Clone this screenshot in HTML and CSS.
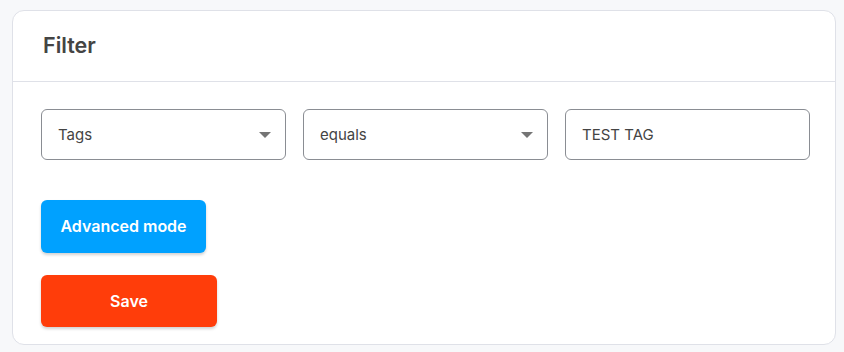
FILE: index.html
```html
<!DOCTYPE html>
<html lang="en">
<head>
    <meta charset="UTF-8">
    <meta name="viewport" content="width=device-width, initial-scale=1.0">
    <title>Filter</title>
    <link rel="stylesheet" href="styles.css">
</head>
<body>
    <div class="card">
        <div class="card-header">
            <h2>Filter</h2>
        </div>
        <div class="card-body">
            <div class="filter-row">
                <div class="field select">
                    <span>Tags</span>
                    <span class="arrow"></span>
                </div>
                <div class="field select">
                    <span>equals</span>
                    <span class="arrow"></span>
                </div>
                <div class="field">
                    <span>TEST TAG</span>
                </div>
            </div>
            <button class="btn btn-advanced">Advanced mode</button>
            <button class="btn btn-save">Save</button>
        </div>
    </div>
</body>
</html>
```

FILE: styles.css
```css
body {
    font-family: Inter, "Liberation Sans", sans-serif;
    background-color: #f7f8fa;
    margin: 0;
    padding: 10px 8px 7px 12px;
    color: #444;
}
.card {
    background-color: #ffffff;
    border: 1px solid #dfe1e8;
    border-radius: 12px;
}
.card-header {
    height: 71px;
    border-bottom: 1px solid #dfe1e8;
    display: flex;
    align-items: center;
    padding: 0 30px 3px;
    box-sizing: border-box;
}
.card-header h2 {
    margin: 0;
    font-size: 21.5px;
    font-weight: 600;
    color: #444;
}
.card-body {
    padding: 27px 25px 17px 28px;
    display: flex;
    flex-direction: column;
    align-items: flex-start;
}
.filter-row {
    display: grid;
    grid-template-columns: repeat(3, 1fr);
    gap: 17px;
    width: 100%;
}
.field {
    height: 51px;
    box-sizing: border-box;
    border: 1px solid #8a8d93;
    border-radius: 6px;
    display: flex;
    align-items: center;
    justify-content: space-between;
    padding: 0 16px;
    font-size: 15px;
    color: #444;
}
.arrow {
    width: 0;
    height: 0;
    border-left: 6px solid transparent;
    border-right: 6px solid transparent;
    border-top: 6px solid #757575;
    margin-right: -2px;
}
.btn {
    border: none;
    border-radius: 6px;
    color: #ffffff;
    font-family: inherit;
    font-size: 16px;
    font-weight: 600;
    height: 53px;
    box-shadow: 0 2px 3px rgba(0, 0, 0, 0.18);
    cursor: pointer;
}
.btn-advanced {
    background-color: #00a1ff;
    width: 165px;
    margin-top: 40px;
    padding-bottom: 3px;
}
.btn-save {
    background-color: #ff3d0a;
    width: 176px;
    height: 52px;
    margin-top: 22px;
}
```
